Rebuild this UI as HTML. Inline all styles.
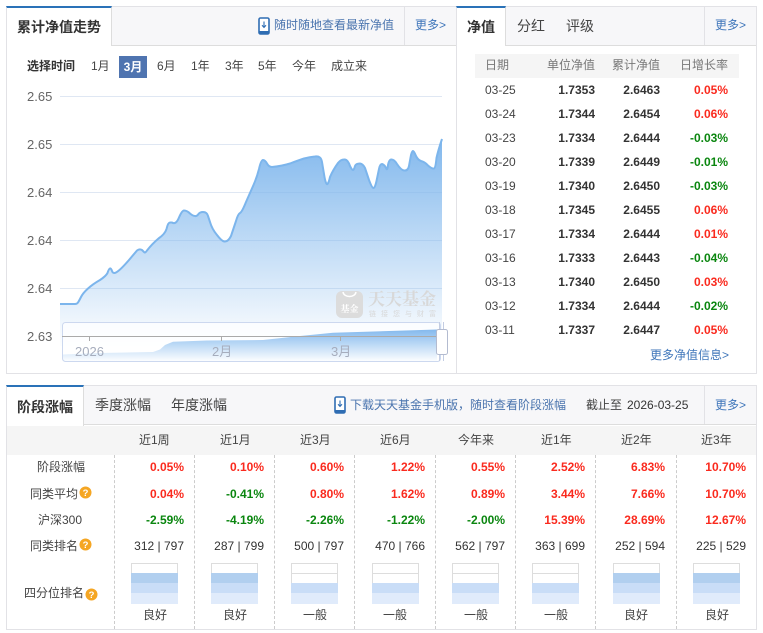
<!DOCTYPE html>
<html><head><meta charset="utf-8"><style>
*{box-sizing:border-box;margin:0;padding:0}
html,body{width:763px;height:633px;background:#fff;overflow:hidden}
body{position:relative;font:12px/20px "Liberation Sans","Noto Sans CJK SC",sans-serif;color:#333}
.a{position:absolute;white-space:nowrap}
.box{position:absolute;border:1px solid #e2e2e6;background:#fff}
.bar{position:absolute;background:#f7f7f9;border-bottom:1px solid #ddd}
.act{position:absolute;background:#fff;border-top:2px solid #2a72b8;border-right:1px solid #ddd}
.sep{position:absolute;width:1px;background:#e2e2e6}
.t{font-size:14px;font-weight:bold;color:#333}
.n{font-size:14px;color:#444}
.l{color:#4a74ae}
.m{color:#3f76ba;font-size:12px}
.tm{top:56px;color:#444}
.y{left:27px;font-size:13px;color:#666}
.g{position:absolute;left:60px;width:382px;height:1px;background:#dfe7f3}
.r{position:absolute;left:0;width:763px;height:20px}
.r span{position:absolute;white-space:nowrap}
.d{left:485px;color:#444}
.u{left:515px;width:80px;text-align:right;font-weight:bold}
.c{left:580px;width:80px;text-align:right;font-weight:bold}
.p{left:648px;width:80px;text-align:right;font-weight:bold}
.h{color:#777;font-weight:normal}
.red{color:#fa2a1e}.gr{color:#0a860f}
.a1{left:104px}.a2{left:184px}.a3{left:264px}.a4{left:345px}.a5{left:425px}.a6{left:505px}.a7{left:585px}.a8{left:666px}
.v span{width:80px;text-align:right;font-weight:bold}
.k span{width:80px;text-align:right;color:#333;font-weight:normal}
.k span.lb,.v span.lb{color:#444;font-weight:normal;width:auto;text-align:left}
.dash{position:absolute;top:455px;height:174px;width:0;border-left:1px dashed #ccc}
.q{position:absolute;top:563px;width:47px;height:41px;border:1px solid #ddd;border-bottom:none;background:#fff}
.q i{position:absolute;left:-1px;width:47px;height:10px;display:block}
.q .w{border:1px solid #ddd;border-bottom:none;background:#fff;height:11px}
.q .b1{top:9px;background:#b1cfef}.q .b2{top:19px;background:#c9ddf7}.q .b3{top:29px;height:11px;background:#e0ebfb}
.ql{position:absolute;top:605px;width:60px;text-align:center;color:#444}
</style></head><body>

<!-- chart panel -->
<div class="box" style="left:6px;top:6px;width:451px;height:368px"></div>
<div class="bar" style="left:7px;top:7px;width:449px;height:39px"></div>
<div class="act" style="left:6px;top:6px;width:106px;height:40px;border-left:1px solid #e2e2e6"></div>
<div class="a t" style="left:17px;top:17px">累计净值走势</div>
<svg class="a" style="left:258px;top:17px" width="12" height="18" viewBox="0 0 12 18"><rect x="1" y="1" width="10" height="16" rx="1.5" fill="#fff" stroke="#2f6db3" stroke-width="1.6"/><rect x="1" y="14" width="10" height="3" fill="#2f6db3"/><path d="M6 4.5V10M4 8.2L6 10.4L8 8.2" fill="none" stroke="#2f6db3" stroke-width="1.1"/></svg>
<div class="a l" style="left:274px;top:15px">随时随地查看最新净值</div>
<div class="sep" style="left:404px;top:7px;height:38px"></div>
<div class="a m" style="left:415px;top:15px">更多&gt;</div>

<div class="a" style="left:27px;top:56px;font-weight:bold;color:#333">选择时间</div>
<div class="a tm" style="left:91px">1月</div>
<div class="a" style="left:119px;top:56px;width:28px;height:22px;background:#4f74b0;color:#fff;font-weight:bold;text-align:center;line-height:22px">3月</div>
<div class="a tm" style="left:157px">6月</div>
<div class="a tm" style="left:191px">1年</div>
<div class="a tm" style="left:225px">3年</div>
<div class="a tm" style="left:258px">5年</div>
<div class="a tm" style="left:292px">今年</div>
<div class="a tm" style="left:331px">成立来</div>

<div class="g" style="top:96px"></div><div class="g" style="top:144px"></div><div class="g" style="top:192px"></div><div class="g" style="top:240px"></div><div class="g" style="top:288px"></div>
<div class="a y" style="top:87px">2.65</div><div class="a y" style="top:135px">2.65</div><div class="a y" style="top:183px">2.64</div><div class="a y" style="top:231px">2.64</div><div class="a y" style="top:279px">2.64</div><div class="a y" style="top:327px">2.63</div>

<svg class="a" style="left:0;top:0" width="460" height="380" viewBox="0 0 460 380">
<defs>
<linearGradient id="ag" gradientUnits="userSpaceOnUse" x1="0" y1="139" x2="0" y2="345"><stop offset="0" stop-color="#82b8ed"/><stop offset="1" stop-color="#82b8ed" stop-opacity="0.02"/></linearGradient>
<linearGradient id="ng" gradientUnits="userSpaceOnUse" x1="0" y1="329" x2="0" y2="361"><stop offset="0" stop-color="#82b8ed"/><stop offset="1" stop-color="#82b8ed" stop-opacity="0.03"/></linearGradient>
</defs>
<path fill="url(#ag)" d="M60 304L75 304Q77 304 78 302.500Q79 301 81 297Q83 293 88 288.500Q93 284 100 280Q106 276 107.500 273Q110 265 112 271Q113 274 116 272.500Q120 270.500 129 260L137 250.500Q139.500 248.500 142 250L144 252Q145 253.500 147 250.500Q152 244 158.500 238.500Q165 234 166.500 229Q168 222.500 170 222.500L172 222.500Q176 225 179 217.500Q182 210.500 184 210.500Q187 210.500 190 213.500Q193 216 195 216Q197 216.500 198.500 214Q200 212 203 212Q207 212 208 216L210 222Q212 229 217 235Q222 241.500 224.500 241.500Q228 242 231 236L236 221Q238 214 240 213Q242 212 246 202L253.500 185Q257 177 259 169Q261 160 263 160Q265 160 267 163.500Q269 167 272 167Q282 166 290 163.500Q298 160.500 304 158.500Q310 157 315 156.500Q321 155.500 322 162L324.500 177Q326 185 327.500 184Q329 182 330 177Q333 170 338 163Q341 159 345 159.500Q348 160 350 166Q352 170 353 170Q354 170 355 166Q356 163.500 360 163.500Q363 164 365 168L369 180Q372 188 373.500 188Q375 188 376.500 181L379 169Q380 164 382 164Q385 165 386.500 169Q387.500 170 388 165Q389 160 391 159.500Q394 159 397 164Q401 170 404 170.500Q408 171 409 166L411 155Q412 151 413 151Q414 151 416 156Q418 160 421 161Q425 162 428 165.500Q432 169 434 168.500Q435.500 168 436.500 158Q438 151 442 139L442 346L60 346Z"/>
<path fill="none" stroke="#7cb5ec" stroke-width="2" stroke-linejoin="round" d="M60 304L75 304Q77 304 78 302.500Q79 301 81 297Q83 293 88 288.500Q93 284 100 280Q106 276 107.500 273Q110 265 112 271Q113 274 116 272.500Q120 270.500 129 260L137 250.500Q139.500 248.500 142 250L144 252Q145 253.500 147 250.500Q152 244 158.500 238.500Q165 234 166.500 229Q168 222.500 170 222.500L172 222.500Q176 225 179 217.500Q182 210.500 184 210.500Q187 210.500 190 213.500Q193 216 195 216Q197 216.500 198.500 214Q200 212 203 212Q207 212 208 216L210 222Q212 229 217 235Q222 241.500 224.500 241.500Q228 242 231 236L236 221Q238 214 240 213Q242 212 246 202L253.500 185Q257 177 259 169Q261 160 263 160Q265 160 267 163.500Q269 167 272 167Q282 166 290 163.500Q298 160.500 304 158.500Q310 157 315 156.500Q321 155.500 322 162L324.500 177Q326 185 327.500 184Q329 182 330 177Q333 170 338 163Q341 159 345 159.500Q348 160 350 166Q352 170 353 170Q354 170 355 166Q356 163.500 360 163.500Q363 164 365 168L369 180Q372 188 373.500 188Q375 188 376.500 181L379 169Q380 164 382 164Q385 165 386.500 169Q387.500 170 388 165Q389 160 391 159.500Q394 159 397 164Q401 170 404 170.500Q408 171 409 166L411 155Q412 151 413 151Q414 151 416 156Q418 160 421 161Q425 162 428 165.500Q432 169 434 168.500Q435.500 168 436.500 158Q438 151 442 139"/>
<rect x="336" y="291" width="27" height="27" rx="6" fill="#dcdcdc"/>
<path d="M343 292C344 298 355 298 356 292" fill="none" stroke="#fff" stroke-width="1.5"/>
<text x="349.500" y="312" font-size="9" fill="#fff" text-anchor="middle" font-family="'Noto Serif CJK SC',serif" font-weight="bold">基金</text>
<text x="368" y="305" font-size="17" fill="#d8d8d8" font-family="'Noto Serif CJK SC',serif" font-weight="bold">天天基金</text>
<text x="369" y="316" font-size="7" fill="#d8d8d8" letter-spacing="5" font-family="'Liberation Sans','Noto Sans CJK SC',sans-serif">链接您与财富</text>
<rect x="62.500" y="322.500" width="378" height="39" rx="3" fill="#fff" fill-opacity="0.7" stroke="#ccd8ef"/>
<path fill="url(#ng)" d="M63 354.500L100 353L153 352L160 349.500L165 345L173 341.700L207 340.500L263 340L300 336L333 332.700L437 329.500L437 361L63 361Z"/>
<path d="M62 336.500H440" stroke="#aaa" fill="none"/>
<path d="M89.500 336V341M221.500 336V341M340.500 336V341" stroke="#aaa" fill="none"/>
<text x="75" y="356" font-size="13" fill="#a6adbd" font-family="'Liberation Sans',sans-serif">2026</text>
<text x="212" y="356" font-size="13" fill="#a6adbd" font-family="'Liberation Sans','Noto Sans CJK SC',sans-serif">2月</text>
<text x="331" y="356" font-size="13" fill="#a6adbd" font-family="'Liberation Sans','Noto Sans CJK SC',sans-serif">3月</text>
<path d="M439.500 322V361M443.500 322V361" stroke="#c3cde3" fill="none"/>
<rect x="436.500" y="329.500" width="11" height="25" rx="2" fill="#fff" stroke="#b3bbd0"/>
</svg>

<!-- nav table panel -->
<div class="box" style="left:456px;top:6px;width:301px;height:368px"></div>
<div class="bar" style="left:457px;top:7px;width:299px;height:39px"></div>
<div class="act" style="left:456px;top:6px;width:50px;height:40px;border-left:1px solid #e2e2e6"></div>
<div class="a t" style="left:467px;top:17px">净值</div>
<div class="a n" style="left:517px;top:16px">分红</div>
<div class="a n" style="left:566px;top:16px">评级</div>
<div class="sep" style="left:704px;top:7px;height:38px"></div>
<div class="a m" style="left:715px;top:15px">更多&gt;</div>
<div class="a" style="left:475px;top:54px;width:264px;height:24px;background:#f5f5f5"></div>
<div class="r" style="top:55px"><span class="d h">日期</span><span class="u h">单位净值</span><span class="c h">累计净值</span><span class="p h">日增长率</span></div>
<div class="r" style="top:80px"><span class="d">03-25</span><span class="u">1.7353</span><span class="c">2.6463</span><span class="p red">0.05%</span></div>
<div class="r" style="top:104px"><span class="d">03-24</span><span class="u">1.7344</span><span class="c">2.6454</span><span class="p red">0.06%</span></div>
<div class="r" style="top:128px"><span class="d">03-23</span><span class="u">1.7334</span><span class="c">2.6444</span><span class="p gr">-0.03%</span></div>
<div class="r" style="top:152px"><span class="d">03-20</span><span class="u">1.7339</span><span class="c">2.6449</span><span class="p gr">-0.01%</span></div>
<div class="r" style="top:176px"><span class="d">03-19</span><span class="u">1.7340</span><span class="c">2.6450</span><span class="p gr">-0.03%</span></div>
<div class="r" style="top:200px"><span class="d">03-18</span><span class="u">1.7345</span><span class="c">2.6455</span><span class="p red">0.06%</span></div>
<div class="r" style="top:224px"><span class="d">03-17</span><span class="u">1.7334</span><span class="c">2.6444</span><span class="p red">0.01%</span></div>
<div class="r" style="top:248px"><span class="d">03-16</span><span class="u">1.7333</span><span class="c">2.6443</span><span class="p gr">-0.04%</span></div>
<div class="r" style="top:272px"><span class="d">03-13</span><span class="u">1.7340</span><span class="c">2.6450</span><span class="p red">0.03%</span></div>
<div class="r" style="top:296px"><span class="d">03-12</span><span class="u">1.7334</span><span class="c">2.6444</span><span class="p gr">-0.02%</span></div>
<div class="r" style="top:320px"><span class="d">03-11</span><span class="u">1.7337</span><span class="c">2.6447</span><span class="p red">0.05%</span></div>
<div class="a m" style="left:650px;top:345px">更多净值信息&gt;</div>

<!-- bottom panel -->
<div class="box" style="left:6px;top:385px;width:751px;height:245px"></div>
<div class="bar" style="left:7px;top:386px;width:749px;height:39px"></div>
<div class="act" style="left:6px;top:385px;width:78px;height:41px;border-left:1px solid #e2e2e6"></div>
<div class="a t" style="left:17px;top:397px">阶段涨幅</div>
<div class="a n" style="left:95px;top:395px">季度涨幅</div>
<div class="a n" style="left:171px;top:395px">年度涨幅</div>
<svg class="a" style="left:334px;top:396px" width="12" height="18" viewBox="0 0 12 18"><rect x="1" y="1" width="10" height="16" rx="1.5" fill="#fff" stroke="#2f6db3" stroke-width="1.6"/><rect x="1" y="14" width="10" height="3" fill="#2f6db3"/><path d="M6 4.5V10M4 8.2L6 10.4L8 8.2" fill="none" stroke="#2f6db3" stroke-width="1.1"/></svg>
<div class="a l" style="left:350px;top:395px">下载天天基金手机版，随时查看阶段涨幅</div>
<div class="a" style="left:586px;top:395px;color:#444">截止至</div>
<div class="a" style="left:627px;top:395px;color:#333">2026-03-25</div>
<div class="sep" style="left:704px;top:386px;height:38px"></div>
<div class="a m" style="left:715px;top:395px">更多&gt;</div>

<div class="a" style="left:7px;top:426px;width:749px;height:29px;background:#f5f5f5"></div>
<div class="a" style="left:139px;top:430px;color:#444">近1周</div>
<div class="a" style="left:220px;top:430px;color:#444">近1月</div>
<div class="a" style="left:300px;top:430px;color:#444">近3月</div>
<div class="a" style="left:380px;top:430px;color:#444">近6月</div>
<div class="a" style="left:458px;top:430px;color:#444">今年来</div>
<div class="a" style="left:541px;top:430px;color:#444">近1年</div>
<div class="a" style="left:621px;top:430px;color:#444">近2年</div>
<div class="a" style="left:701px;top:430px;color:#444">近3年</div>

<div class="dash" style="left:114px"></div><div class="dash" style="left:194px"></div><div class="dash" style="left:274px"></div><div class="dash" style="left:354px"></div><div class="dash" style="left:435px"></div><div class="dash" style="left:515px"></div><div class="dash" style="left:595px"></div><div class="dash" style="left:676px"></div>

<div class="r v" style="top:457px"><span class="lb" style="left:37px">阶段涨幅</span><span class="a1 red">0.05%</span><span class="a2 red">0.10%</span><span class="a3 red">0.60%</span><span class="a4 red">1.22%</span><span class="a5 red">0.55%</span><span class="a6 red">2.52%</span><span class="a7 red">6.83%</span><span class="a8 red">10.70%</span></div>
<div class="r v" style="top:484px"><span class="lb" style="left:30px">同类平均</span><span class="a1 red">0.04%</span><span class="a2 gr">-0.41%</span><span class="a3 red">0.80%</span><span class="a4 red">1.62%</span><span class="a5 red">0.89%</span><span class="a6 red">3.44%</span><span class="a7 red">7.66%</span><span class="a8 red">10.70%</span></div>
<div class="r v" style="top:510px"><span class="lb" style="left:38px">沪深300</span><span class="a1 gr">-2.59%</span><span class="a2 gr">-4.19%</span><span class="a3 gr">-2.26%</span><span class="a4 gr">-1.22%</span><span class="a5 gr">-2.00%</span><span class="a6 red">15.39%</span><span class="a7 red">28.69%</span><span class="a8 red">12.67%</span></div>
<div class="r k" style="top:536px"><span class="lb" style="left:30px;color:#444">同类排名</span><span class="a1">312 | 797</span><span class="a2">287 | 799</span><span class="a3">500 | 797</span><span class="a4">470 | 766</span><span class="a5">562 | 797</span><span class="a6">363 | 699</span><span class="a7">252 | 594</span><span class="a8">225 | 529</span></div>
<div class="a" style="left:24px;top:583px;color:#444">四分位排名</div>

<svg class="a" style="left:79px;top:486px" width="13" height="13" viewBox="0 0 13 13"><circle cx="6.500" cy="6.500" r="6" fill="#f5a623"/><text x="6.500" y="10" font-size="9.500" font-weight="bold" fill="#fff" text-anchor="middle" font-family="'Liberation Sans',sans-serif">?</text></svg>
<svg class="a" style="left:79px;top:538px" width="13" height="13" viewBox="0 0 13 13"><circle cx="6.500" cy="6.500" r="6" fill="#f5a623"/><text x="6.500" y="10" font-size="9.500" font-weight="bold" fill="#fff" text-anchor="middle" font-family="'Liberation Sans',sans-serif">?</text></svg>
<svg class="a" style="left:85px;top:588px" width="13" height="13" viewBox="0 0 13 13"><circle cx="6.500" cy="6.500" r="6" fill="#f5a623"/><text x="6.500" y="10" font-size="9.500" font-weight="bold" fill="#fff" text-anchor="middle" font-family="'Liberation Sans',sans-serif">?</text></svg>

<div class="q" style="left:131px"><i class="b1"></i><i class="b2"></i><i class="b3"></i></div>
<div class="q" style="left:211px"><i class="b1"></i><i class="b2"></i><i class="b3"></i></div>
<div class="q" style="left:291px"><i class="w" style="top:9px"></i><i class="b2"></i><i class="b3"></i></div>
<div class="q" style="left:372px"><i class="w" style="top:9px"></i><i class="b2"></i><i class="b3"></i></div>
<div class="q" style="left:452px"><i class="w" style="top:9px"></i><i class="b2"></i><i class="b3"></i></div>
<div class="q" style="left:532px"><i class="w" style="top:9px"></i><i class="b2"></i><i class="b3"></i></div>
<div class="q" style="left:613px"><i class="b1"></i><i class="b2"></i><i class="b3"></i></div>
<div class="q" style="left:693px"><i class="b1"></i><i class="b2"></i><i class="b3"></i></div>

<div class="ql" style="left:125px">良好</div>
<div class="ql" style="left:205px">良好</div>
<div class="ql" style="left:285px">一般</div>
<div class="ql" style="left:365px">一般</div>
<div class="ql" style="left:446px">一般</div>
<div class="ql" style="left:526px">一般</div>
<div class="ql" style="left:606px">良好</div>
<div class="ql" style="left:687px">良好</div>
</body></html>
